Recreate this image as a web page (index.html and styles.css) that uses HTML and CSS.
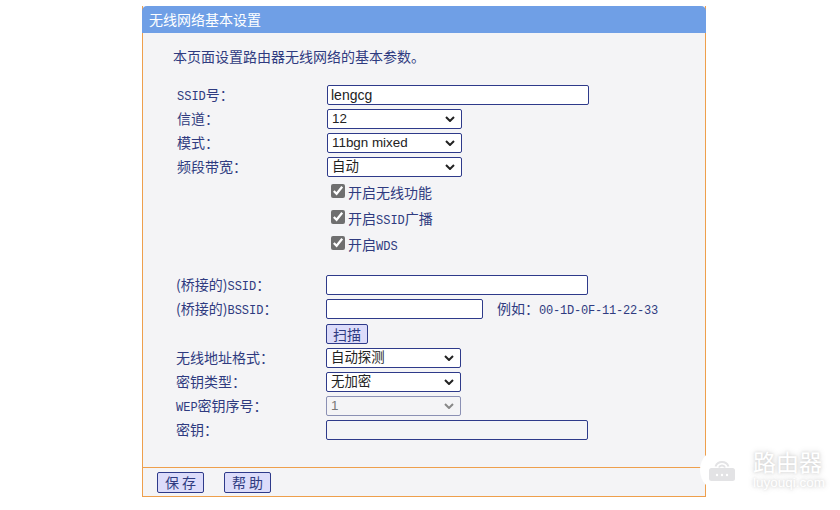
FILE: index.html
```html
<!DOCTYPE html>
<html lang="zh-CN">
<head>
<meta charset="utf-8">
<title>无线网络基本设置</title>
<link rel="stylesheet" href="styles.css">
</head>
<body>
<main class="panel">
  <h1 class="title">无线网络基本设置</h1>
  <div class="body">
    <p class="intro">本页面设置路由器无线网络的基本参数。</p>
    <div class="form form-top">
      <label class="lbl"><span class="la">SSID</span>号：</label>
      <input class="ctl wide" type="text" value="lengcg">
      <label class="lbl">信道：</label>
      <select class="ctl sel"><option>12</option></select>
      <label class="lbl">模式：</label>
      <select class="ctl sel"><option>11bgn mixed</option></select>
      <label class="lbl">频段带宽：</label>
      <select class="ctl sel"><option>自动</option></select>
    </div>
    <div class="checks">
      <label class="check"><input type="checkbox" checked><span>开启无线功能</span></label>
      <label class="check"><input type="checkbox" checked><span>开启<span class="la">SSID</span>广播</span></label>
      <label class="check"><input type="checkbox" checked><span>开启<span class="la">WDS</span></span></label>
    </div>
    <div class="form form-bottom">
      <label class="lbl">(桥接的)<span class="la">SSID</span>：</label>
      <input class="ctl wide" type="text">
      <label class="lbl">(桥接的)<span class="la">BSSID</span>：</label>
      <div class="bssid">
        <input class="ctl mid" type="text">
        <span class="hint">例如：<span class="la mac">00-1D-0F-11-22-33</span></span>
      </div>
      <span></span>
      <div class="scan"><button class="btn" type="button">扫描</button></div>
      <label class="lbl">无线地址格式：</label>
      <select class="ctl sel"><option>自动探测</option></select>
      <label class="lbl">密钥类型：</label>
      <select class="ctl sel"><option>无加密</option></select>
      <label class="lbl"><span class="la">WEP</span>密钥序号：</label>
      <select class="ctl sel" disabled><option>1</option></select>
      <label class="lbl">密钥：</label>
      <input class="ctl wide off" type="text" disabled>
    </div>
  </div>
  <footer class="foot">
    <button class="btn wbtn" type="button">保 存</button>
    <button class="btn wbtn" type="button">帮 助</button>
  </footer>
</main>
<aside class="mark">
  <div class="disc">
    <svg width="28" height="26" viewBox="0 0 28 26" aria-hidden="true">
      <path d="M7.5 9.5a7 7 0 0 1 13 0M11 10.5a3.2 3.2 0 0 1 6 0" fill="none" stroke="#e3e3e5" stroke-width="2"/>
      <rect x="1" y="11" width="26" height="13" rx="2.5" fill="#e3e3e5"/>
      <circle cx="9" cy="18" r="1.2" fill="#fff"/><circle cx="14" cy="18" r="1.2" fill="#fff"/><circle cx="19" cy="18" r="1.2" fill="#fff"/>
    </svg>
  </div>
  <div class="brand">
    <div class="brand-cn">路由器</div>
    <div class="brand-en">luyouqi.com</div>
  </div>
</aside>
</body>
</html>
```
FILE: styles.css
```css
* { box-sizing: border-box; }
html, body { margin: 0; background: #fff; }
body {
  position: relative;
  height: 510px;
  overflow: hidden;
  padding: 6px 0 0 142px;
  font-family: "Noto Sans CJK SC", sans-serif;
  font-size: 14px;
  color: #2f3b80;
}
.panel {
  width: 564px;
  height: 491px;
  display: flex;
  flex-direction: column;
  background: #f4f4f6;
  border: 1px solid #ee9f4c;
  border-top: 0;
}
.title {
  margin: 0 -1px;
  height: 27px;
  padding-left: 7px;
  background: #6f9fe6;
  border-radius: 5px 5px 0 0;
  color: #fff;
  font-size: 14px;
  font-weight: 400;
  line-height: 26px;
}
.body { flex: 1; padding: 13px 0 0 30px; }
.intro { margin: 0; height: 20px; line-height: 20px; font-size: 14px; }
.la { font-family: "Liberation Mono", monospace; font-size: 12px; }
.mac { letter-spacing: -0.2px; }
.form { display: grid; align-items: center; grid-template-columns: 150px 1fr; row-gap: 4px; }
.form-top { margin: 19px 0 0 4px; grid-auto-rows: 20px; }
.form-bottom { margin: 21px 0 0 3px; grid-template-rows: 20px 20px 21px 20px 20px 20px 20px; }
.lbl { height: 20px; line-height: 18px; white-space: nowrap; }
.ctl {
  height: 20px;
  margin: 0;
  border: 1px solid #2e3a8a;
  border-radius: 2px;
  background: #fff;
  color: #222;
  font-family: "Liberation Sans", "Noto Sans CJK SC", sans-serif;
  font-size: 14px;
  padding: 0 3px;
}
.wide { width: 262px; }
.sel {
  width: 135px;
  padding: 0 18px 1px 4px;
  font-size: 13.4px;
  appearance: none;
  background: #fff url("data:image/svg+xml,%3Csvg xmlns='http://www.w3.org/2000/svg' width='10' height='6'%3E%3Cpath d='M1 1l4 4 4-4' fill='none' stroke='%23222' stroke-width='2'/%3E%3C/svg%3E") no-repeat right 6px center;
}
.mid { width: 157px; }
.off { background: #f4f4f6; }
.sel:disabled {
  color: #777;
  border-color: #8b90b4;
  background: #f4f4f6 url("data:image/svg+xml,%3Csvg xmlns='http://www.w3.org/2000/svg' width='10' height='6'%3E%3Cpath d='M1 1l4 4 4-4' fill='none' stroke='%23888' stroke-width='2'/%3E%3C/svg%3E") no-repeat right 6px center;
  opacity: 1;
}
.bssid { display: flex; align-items: center; gap: 14px; height: 20px; white-space: nowrap; }
.hint { height: 20px; line-height: 18px; }
.scan { display: flex; height: 21px; padding-top: 1px; }
.checks {
  display: flex;
  flex-direction: column;
  gap: 6px;
  margin: 5px 0 0 158px;
}
.check { display: flex; align-items: center; height: 20px; gap: 3px; }
.check input {
  width: 14px;
  height: 14px;
  margin: -2px 0 0;
  accent-color: #6f6f6f;
}
.btn {
  height: 20px;
  margin: 0;
  padding: 0 6px;
  border: 1px solid #2e3a8a;
  border-radius: 2px;
  background: #dcdcfa;
  color: #2f3b80;
  font-family: "Noto Sans CJK SC", sans-serif;
  font-size: 14px;
  line-height: 18px;
}
.foot {
  height: 29px;
  display: flex;
  align-items: center;
  gap: 20px;
  padding: 0 0 0 14px;
  border-top: 1px solid #ee9f4c;
}
.wbtn { width: 47px; height: 21px; padding: 0; }
.mark {
  position: absolute;
  left: 700px;
  top: 448px;
  display: flex;
  gap: 9px;
  color: #fff;
}
.disc {
  width: 44px;
  height: 44px;
  border-radius: 50%;
  background: #fff;
  display: flex;
  align-items: center;
  justify-content: center;
}
.brand { text-shadow: 0 0 6px #ccc, 0 0 3px #d8d8d8; }
.brand-cn { font-size: 23px; line-height: 26px; }
.brand-en { margin-top: 1px; font-family: "Liberation Sans", sans-serif; font-size: 13.5px; line-height: 15px; }
```
